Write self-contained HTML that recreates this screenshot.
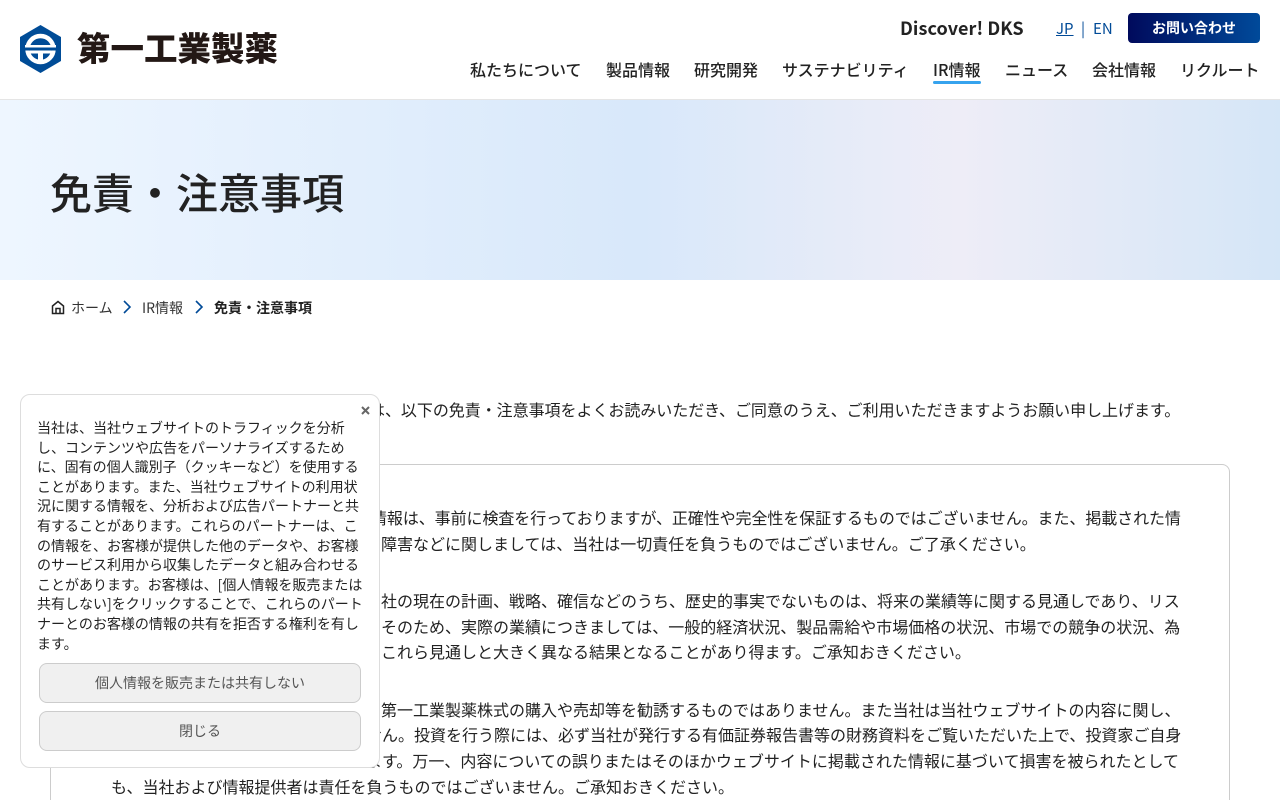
<!DOCTYPE html>
<html lang="ja"><head><meta charset="utf-8"><title>免責・注意事項</title>
<style>
*{box-sizing:border-box;margin:0;padding:0}
html,body{width:1280px;height:800px;overflow:hidden;background:#fff}
body{position:relative;font-family:"Noto Sans CJK JP","Liberation Sans",sans-serif;color:#222}
.a{position:absolute;white-space:nowrap}
.nav{top:57px;font-size:16px;line-height:24px;font-weight:500;color:#222}
.l{position:absolute;white-space:nowrap;font-size:16px;line-height:26px;color:#222}
.hero{position:absolute;left:0;top:100px;width:1280px;height:180px;background:linear-gradient(90deg,#eef6ff 0%,#d8e8fa 50%,#eeedf7 75%,#d5e6f7 100%)}
.pop{position:absolute;left:20px;top:394px;width:360px;height:374px;background:#fff;border:1px solid #ddd;border-radius:10px;z-index:5}
.pop p{position:absolute;left:16px;top:24px;font-size:14px;line-height:19.6px;white-space:nowrap;color:#222}
.btn{position:absolute;left:18px;width:322px;height:40px;background:#f0f0f0;border:1px solid #ccc;border-radius:8px;font-size:14px;line-height:39px;text-align:center;color:#555}
</style></head><body>
<div class="a" style="left:0;top:99px;width:1280px;height:1px;background:#e5e5e5"></div>
<svg class="a" style="left:20px;top:25px" width="41" height="48" viewBox="0 0 41 48">
<path d="M20.5 0L41 12V36L20.5 48L0 36V12Z" fill="#004c97"/>
<circle cx="20.5" cy="24" r="13" fill="none" stroke="#fff" stroke-width="4.5"/>
<rect x="5" y="20" width="31" height="2.5" fill="#fff"/>
<rect x="4" y="22.5" width="33" height="3" fill="#004c97"/>
<rect x="10" y="25.5" width="21" height="3" fill="#fff"/>
<rect x="18" y="25.5" width="5" height="12" fill="#fff"/>
</svg>
<svg class="a" style="left:76px;top:26px" width="204" height="46" viewBox="0 0 204 46"><text x="1" y="34.5" font-size="33" font-weight="900" textLength="201" lengthAdjust="spacingAndGlyphs" fill="#231815">第一工業製薬</text></svg>

<div class="a" style="left:900px;top:15px;font-size:18px;line-height:26px;font-weight:700;color:#222;letter-spacing:.08px">Discover! DKS</div>
<div class="a" style="left:1056px;top:18px;font-size:15px;line-height:21px;font-weight:400;color:#004a97;text-decoration:underline">JP</div>
<div class="a" style="left:1081px;top:18px;font-size:15px;line-height:21px;font-weight:400;color:#004a97">|</div>
<div class="a" style="left:1093px;top:18px;font-size:15px;line-height:21px;font-weight:400;color:#004a97">EN</div>
<div class="a" style="left:1128px;top:13px;width:132px;height:30px;border-radius:4px;background:linear-gradient(90deg,#000a5c,#004a9a);color:#fff;font-size:14px;font-weight:700;line-height:30px;text-align:center">お問い合わせ</div>

<div class="a nav" style="left:470px">私たちについて</div>
<div class="a nav" style="left:606px">製品情報</div>
<div class="a nav" style="left:694px">研究開発</div>
<div class="a nav" style="left:782px">サステナビリティ</div>
<div class="a nav" style="left:933px">IR情報</div>
<div class="a" style="left:933px;top:81px;width:48px;height:3px;border-radius:2px;background:#36a3ee"></div>
<div class="a nav" style="left:1005px">ニュース</div>
<div class="a nav" style="left:1092px">会社情報</div>
<div class="a nav" style="left:1180px">リクルート</div>

<div class="hero"></div>
<h1 class="a" style="left:50px;top:160px;font-size:42px;line-height:64px;font-weight:500;color:#222">免責・注意事項</h1>

<svg class="a" style="left:51px;top:300px" width="14" height="15" viewBox="0 0 14 15" fill="none" stroke="#222" stroke-width="1.5"><path d="M1.5 6L7 1.5L12.5 6V13.5H1.5Z"/><path d="M5 13.5V8.5H9V13.5"/></svg>
<div class="a" style="left:71px;top:298px;font-size:14px;line-height:20px;color:#333">ホーム</div>
<svg class="a" style="left:122px;top:300px" width="10" height="14" viewBox="0 0 10 14" fill="none" stroke="#004a97" stroke-width="1.6"><path d="M2 1L8 7L2 13"/></svg>
<div class="a" style="left:142px;top:298px;font-size:14px;line-height:20px;color:#333">IR情報</div>
<svg class="a" style="left:194px;top:300px" width="10" height="14" viewBox="0 0 10 14" fill="none" stroke="#004a97" stroke-width="1.6"><path d="M2 1L8 7L2 13"/></svg>
<div class="a" style="left:214px;top:298px;font-size:14px;line-height:20px;font-weight:700;color:#222">免責・注意事項</div>

<div class="l" style="left:369px;top:396px;letter-spacing:-.04px">は、以下の免責・注意事項をよくお読みいただき、ご同意のうえ、ご利用いただきますようお願い申し上げます。</div>
<div class="a" style="left:50px;top:464px;width:1180px;height:336px;border:1px solid #ccc;border-bottom:0;border-radius:8px 8px 0 0"></div>

<div class="l" style="left:371px;top:504px;letter-spacing:-.08px">情報は、事前に検査を行っておりますが、正確性や完全性を保証するものではございません。また、掲載された情</div>
<div class="l" style="left:381px;top:530px">障害などに関しましては、当社は一切責任を負うものではございません。ご了承ください。</div>
<div class="l" style="left:381px;top:587px">社の現在の計画、戦略、確信などのうち、歴史的事実でないものは、将来の業績等に関する見通しであり、リス</div>
<div class="l" style="left:381px;top:613px">そのため、実際の業績につきましては、一般的経済状況、製品需給や市場価格の状況、市場での競争の状況、為</div>
<div class="l" style="left:381px;top:638px">これら見通しと大きく異なる結果となることがあり得ます。ご承知おきください。</div>
<div class="l" style="left:381px;top:696px">第一工業製薬株式の購入や売却等を勧誘するものではありません。また当社は当社ウェブサイトの内容に関し、</div>
<div class="l" style="left:366px;top:721px">せん。投資を行う際には、必ず当社が発行する有価証券報告書等の財務資料をご覧いただいた上で、投資家ご自身</div>
<div class="l" style="left:366px;top:747px">ます。万一、内容についての誤りまたはそのほかウェブサイトに掲載された情報に基づいて損害を被られたとして</div>
<div class="l" style="left:111px;top:773px">も、当社および情報提供者は責任を負うものではございません。ご承知おきください。</div>

<div class="pop">
<svg class="a" style="left:340px;top:11px" width="9" height="9" viewBox="0 0 9 9" fill="none" stroke="#666" stroke-width="2"><path d="M1 1L8 8M8 1L1 8"/></svg>
<p>当社は、当社ウェブサイトのトラフィックを分析<br>し、コンテンツや広告をパーソナライズするため<br>に、固有の個人識別子（クッキーなど）を使用する<br>ことがあります。また、当社ウェブサイトの利用状<br>況に関する情報を、分析および広告パートナーと共<br>有することがあります。これらのパートナーは、こ<br>の情報を、お客様が提供した他のデータや、お客様<br>のサービス利用から収集したデータと組み合わせる<br>ことがあります。お客様は、[個人情報を販売または<br>共有しない]をクリックすることで、これらのパート<br>ナーとのお客様の情報の共有を拒否する権利を有し<br>ます。</p>
<div class="btn" style="top:268px">個人情報を販売または共有しない</div>
<div class="btn" style="top:316px">閉じる</div>
</div>
</body></html>
